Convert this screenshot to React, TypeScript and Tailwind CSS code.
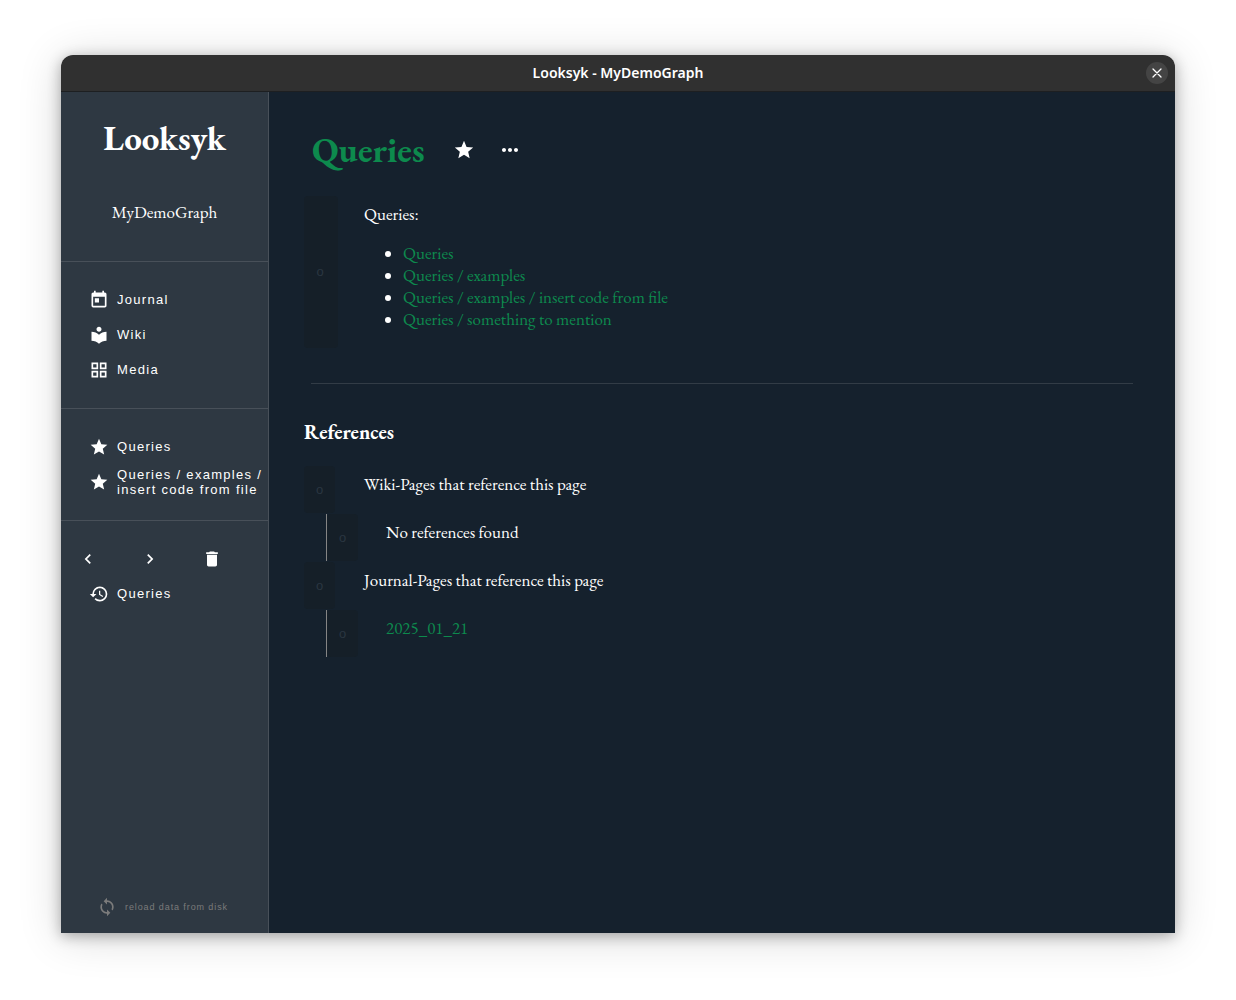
import type { ReactNode } from "react";
import type { IconType } from "react-icons";
import {
  MdChevronLeft,
  MdChevronRight,
  MdDelete,
  MdGridView,
  MdHistory,
  MdLocalLibrary,
  MdLoop,
  MdMoreHoriz,
  MdStar,
  MdToday,
} from "react-icons/md";

function NavItem({ icon: Icon, label }: { icon: IconType; label: string }) {
  return (
    <li>
      <a href="#" className="flex h-[35px] items-center gap-2 pl-7 text-[13px] leading-[15px] tracking-widest text-white">
        <Icon className="size-5 shrink-0" />
        <span>{label}</span>
      </a>
    </li>
  );
}

function Section({ children }: { children: ReactNode }) {
  return <div className="border-t border-[#485059] pt-5 pb-[21px]">{children}</div>;
}

function Sidebar() {
  return (
    <aside className="flex w-52 shrink-0 flex-col border-r border-[#485059] bg-[#2e3842] font-['Liberation_Sans',sans-serif]">
      <header className="flex h-[169px] flex-col items-center gap-[42px] pt-[26px] font-['EB_Garamond','Liberation_Serif',serif] text-white">
        <h1 className="text-[35px] leading-10 font-bold">Looksyk</h1>
        <p className="text-[17px] leading-6">MyDemoGraph</p>
      </header>
      <Section>
        <ul>
          <NavItem icon={MdToday} label="Journal" />
          <NavItem icon={MdLocalLibrary} label="Wiki" />
          <NavItem icon={MdGridView} label="Media" />
        </ul>
      </Section>
      <Section>
        <ul>
          <NavItem icon={MdStar} label="Queries" />
          <NavItem icon={MdStar} label="Queries / examples / insert code from file" />
        </ul>
      </Section>
      <Section>
        <div className="grid h-[35px] grid-cols-3 items-center pr-1 pl-[17px] text-white">
          <button type="button" aria-label="Back">
            <MdChevronLeft className="size-5" />
          </button>
          <button type="button" aria-label="Forward">
            <MdChevronRight className="size-5" />
          </button>
          <button type="button" aria-label="Clear history">
            <MdDelete className="size-5" />
          </button>
        </div>
        <ul>
          <NavItem icon={MdHistory} label="Queries" />
        </ul>
      </Section>
      <button type="button" className="mt-auto mb-4 flex items-center gap-2 pl-9 text-[#7b7b7b]">
        <MdLoop className="size-5" />
        <span className="pt-0.5 text-[9px] tracking-widest">reload data from disk</span>
      </button>
    </aside>
  );
}

function Marker({ wide = false }: { wide?: boolean }) {
  return (
    <button
      type="button"
      aria-label="Select block"
      className={`flex shrink-0 items-center justify-center rounded bg-[#151f28] font-['Liberation_Sans',sans-serif] text-[13px] text-[#2a3641] ${wide ? "w-[34px] pr-0.5" : "w-[31px]"}`}
    >
      o
    </button>
  );
}

function Reference({ nested = false, children }: { nested?: boolean; children: ReactNode }) {
  return (
    <li className={nested ? "ml-[22px] flex h-[47px] gap-7 border-l border-[#858585]" : "flex h-[47px] gap-[29px]"}>
      <Marker />
      <p className="pt-[7px] leading-[22px]">{children}</p>
    </li>
  );
}

const pages = [
  "Queries",
  "Queries / examples",
  "Queries / examples / insert code from file",
  "Queries / something to mention",
];

export default function App() {
  return (
    <div className="flex min-h-screen flex-col bg-white px-[61px] pt-[55px] pb-[67px]">
      <div className="flex flex-1 flex-col overflow-hidden rounded-t-xl shadow-[0_3px_14px_rgba(0,0,0,0.3),0_4px_44px_rgba(0,0,0,0.16)]">
        <div className="grid h-[37px] grid-cols-[1fr_auto_1fr] items-center border-b border-[#1d1f21] bg-[#303030] px-[7px] text-white">
          <h2 className="col-start-2 font-['Noto_Sans',sans-serif] text-sm leading-5 font-semibold">Looksyk - MyDemoGraph</h2>
          <button type="button" aria-label="Close" className="flex size-[22px] items-center justify-center justify-self-end rounded-full bg-[#444444]">
            <svg viewBox="0 0 10 10" className="size-[10px]" fill="none" stroke="currentColor" strokeWidth="1.3" strokeLinecap="round">
              <path d="M1 1 9 9M9 1 1 9" />
            </svg>
          </button>
        </div>
        <div className="flex flex-1">
          <Sidebar />
          <main className="min-w-0 flex-1 bg-[#15212d] pt-[38px] pr-[42px] pl-[35px] font-['EB_Garamond','Liberation_Serif',serif] text-[17px] leading-[22px] text-white">
            <div className="flex items-center pl-2">
              <h1 className="text-[35px] leading-10 font-bold text-[#0d8a4d]">Queries</h1>
              <button type="button" aria-label="Remove from favourites" className="ml-7">
                <MdStar className="size-[22px]" />
              </button>
              <button type="button" aria-label="More actions" className="ml-[23px]">
                <MdMoreHoriz className="size-6" />
              </button>
            </div>
            <div className="mt-[26px] flex gap-[26px]">
              <Marker wide />
              <div className="pt-[7px] pb-[18px]">
                <p>Queries:</p>
                <ul className="mt-[17px] list-disc pl-[39px]">
                  {pages.map((page) => (
                    <li key={page}>
                      <a href="#" className="text-[#0d8a4d]">{page}</a>
                    </li>
                  ))}
                </ul>
              </div>
            </div>
            <hr className="mt-[35px] ml-[7px] border-[#323c46]" />
            <h2 className="mt-9 text-xl leading-6 font-bold">References</h2>
            <ul className="mt-[22px] flex flex-col gap-px">
              <Reference>Wiki-Pages that reference this page</Reference>
              <Reference nested>No references found</Reference>
              <Reference>Journal-Pages that reference this page</Reference>
              <Reference nested>
                <a href="#" className="text-[#0d8a4d]">2025_01_21</a>
              </Reference>
            </ul>
          </main>
        </div>
      </div>
    </div>
  );
}
